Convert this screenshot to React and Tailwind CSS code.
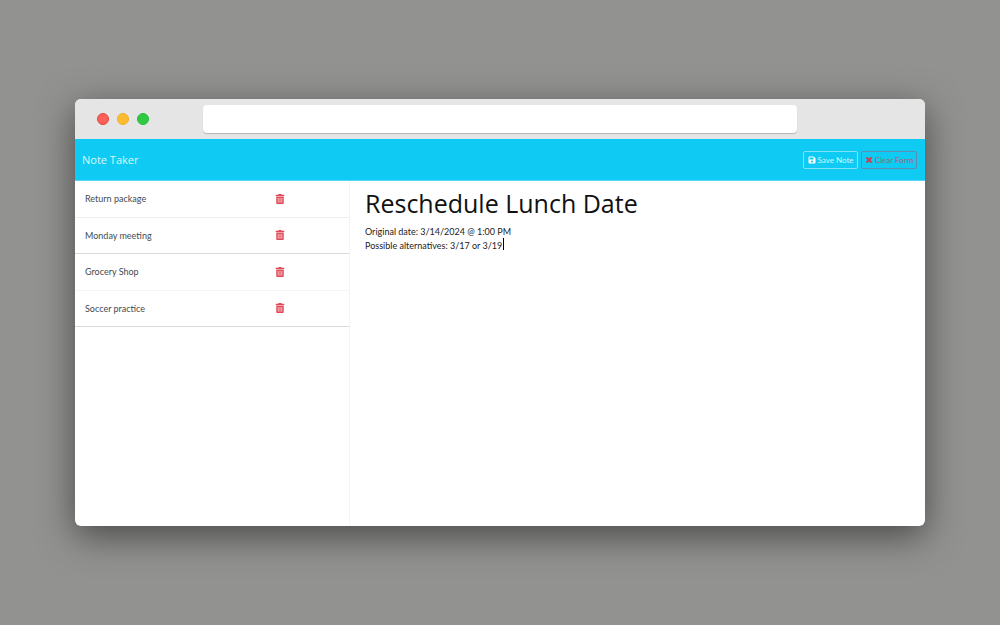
import { useState } from "react";
import { FaSave, FaTimes, FaTrashAlt } from "react-icons/fa";

const initialNotes = [
  { title: "Return package", line: "border-[#f0f0f0]" },
  { title: "Monday meeting", line: "border-[#dadada]" },
  { title: "Grocery Shop", line: "border-[#f4f4f4]" },
  { title: "Soccer practice", line: "border-[#dadada]" },
];

function BrowserBar() {
  return (
    <div className="flex h-10 items-center bg-[#e5e5e5] px-[22px]">
      <div className="flex w-[106px] shrink-0 gap-2">
        <span className="size-3 rounded-full border border-[#e0453d] bg-[#fc6058]" />
        <span className="size-3 rounded-full border border-[#f0ae2a] bg-[#fdbc2f]" />
        <span className="size-3 rounded-full border border-[#27bc38] bg-[#2fca41]" />
      </div>
      <input
        aria-label="Address"
        className="h-7 min-w-0 flex-1 rounded bg-white px-2 text-xs shadow-[0_1px_1px_rgba(0,0,0,0.22)] outline-none"
      />
      <div className="w-[106px] shrink-0" />
    </div>
  );
}

function Header({ onClear }) {
  return (
    <header className="flex h-[42px] items-center justify-between border-b border-[#55d8f5] bg-[#0fcaf2] pr-2 pl-[7px]">
      <a href="#" className="text-[11px] leading-4 text-[#dff7fd]">Note Taker</a>
      <div className="flex gap-[3px] font-['Lato','Open_Sans',sans-serif]">
        <button className="flex h-[18px] w-[55px] items-center justify-center gap-[2px] rounded-[2px] border border-[#7fe2f8] text-[8px] whitespace-nowrap text-[#d3f5fd]">
          <FaSave className="size-2 shrink-0 text-white" />
          Save Note
        </button>
        <button
          onClick={onClear}
          className="flex h-[18px] w-14 items-center justify-center gap-[2px] rounded-[2px] border border-[#5b8fac] text-[8px] whitespace-nowrap text-[#a5616f]"
        >
          <FaTimes className="size-2 shrink-0 stroke-[#dc3545] stroke-[40px] text-[#dc3545]" />
          Clear Form
        </button>
      </div>
    </header>
  );
}

function NoteList({ notes, onDelete }) {
  return (
    <aside className="w-[275px] shrink-0 border-r border-[#f4f4f4]">
      <ul className="grid h-[146px] grid-rows-4 font-['Lato','Open_Sans',sans-serif]">
        {notes.map((note) => (
          <li key={note.title} className={"flex items-center border-b pl-[10px] " + note.line}>
            <button className="w-[190px] pt-px text-left text-[9px] leading-4 text-[#454a4f]">{note.title}</button>
            <button aria-label={"Delete " + note.title} onClick={() => onDelete(note.title)} className="text-[#e04a58]">
              <FaTrashAlt className="size-[10px]" />
            </button>
          </li>
        ))}
      </ul>
    </aside>
  );
}

export default function App() {
  const [notes, setNotes] = useState(initialNotes);
  const [title, setTitle] = useState("Reschedule Lunch Date");
  const [text, setText] = useState("Original date: 3/14/2024 @ 1:00 PM\nPossible alternatives: 3/17 or 3/19");
  const [editing, setEditing] = useState(false);

  return (
    <div className="flex min-h-screen items-center justify-center bg-[#929290] font-['Open_Sans','Noto_Sans',sans-serif]">
      <div className="flex w-[85%] flex-col overflow-hidden rounded-md bg-white shadow-[0_10px_36px_rgba(0,0,0,0.5)]">
        <BrowserBar />
        <Header
          onClear={() => {
            setTitle("");
            setText("");
          }}
        />
        <main className="flex min-h-[345px]">
          <NoteList notes={notes} onDelete={(name) => setNotes(notes.filter((n) => n.title !== name))} />
          <section className="min-w-0 flex-1 pt-[2px] pl-[15px]">
            <input
              aria-label="Note title"
              value={title}
              onChange={(e) => setTitle(e.target.value)}
              className="block h-10 w-full text-[25px] text-[#111111] outline-none"
            />
            <div className="relative pt-[2px]">
              <textarea
                aria-label="Note text"
                value={text}
                onFocus={() => setEditing(true)}
                onChange={(e) => setText(e.target.value)}
                rows={20}
                className="block w-full resize-none font-['Lato','Open_Sans',sans-serif] text-[9px] leading-[14px] text-[#222222] outline-none"
              />
              {!editing && <span className="absolute top-[15px] left-[138px] h-3 w-px bg-black" />}
            </div>
          </section>
        </main>
      </div>
    </div>
  );
}
